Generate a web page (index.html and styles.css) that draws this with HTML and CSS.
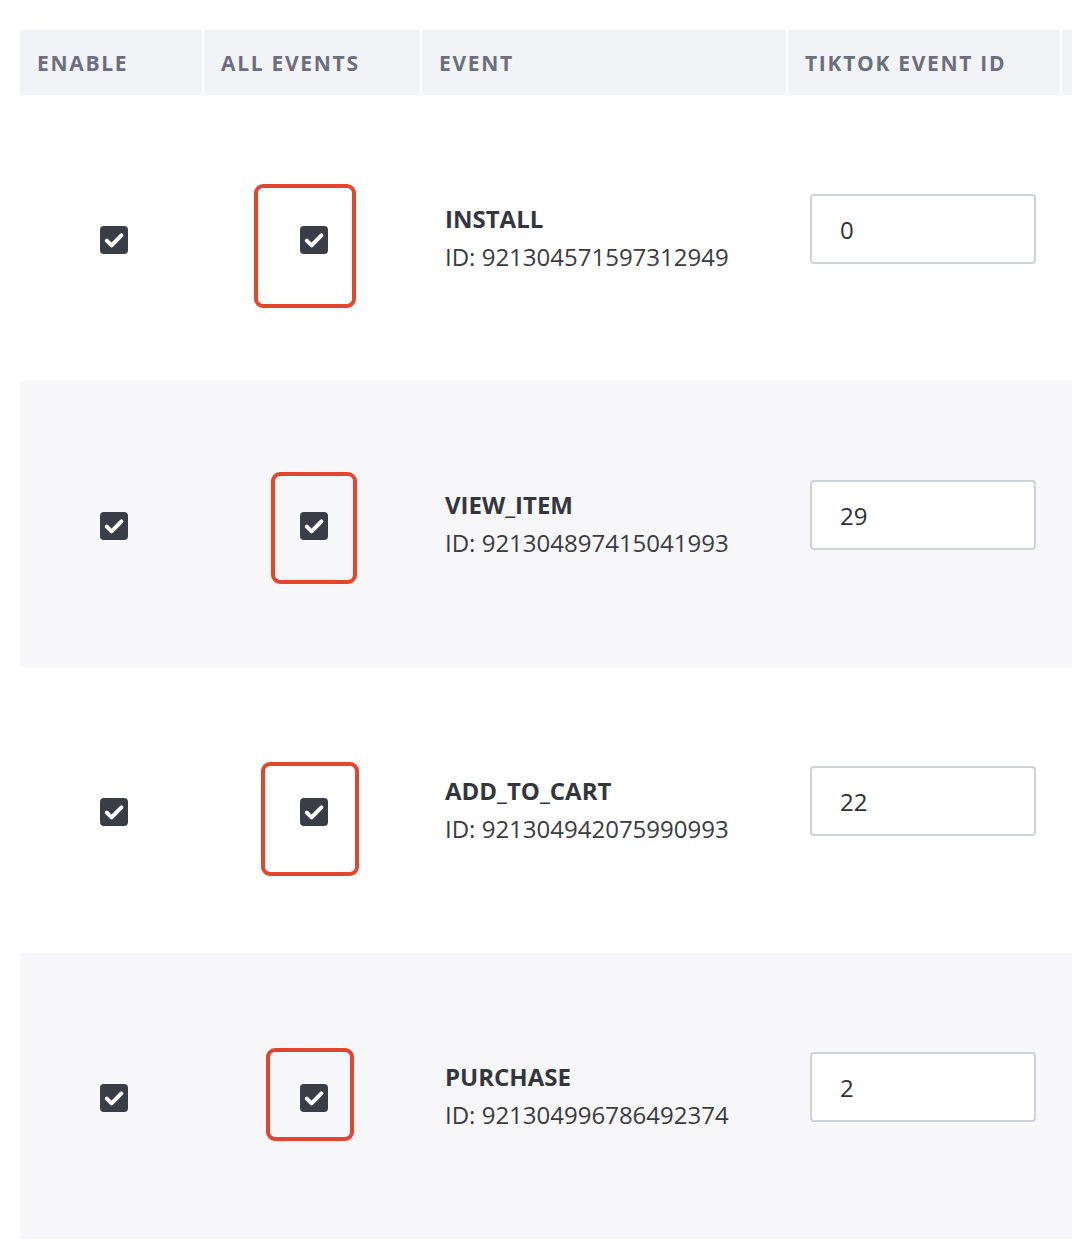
FILE: index.html
```html
<!DOCTYPE html>
<html>
<head>
<meta charset="utf-8">
<link rel="stylesheet" href="styles.css">
</head>
<body>
<div class="table">
  <div class="row head">
    <div class="th">ENABLE</div>
    <div class="th">ALL EVENTS</div>
    <div class="th">EVENT</div>
    <div class="th">TIKTOK EVENT ID</div>
    <div class="th"></div>
  </div>

  <div class="row body">
    <div class="td center"><span class="cb"><svg viewBox="0 0 28 28" width="28" height="28"><rect width="28" height="28" rx="4" fill="#3a3c46"/><path d="M6.8 14.6 L11.6 19.4 L21.4 9.4" fill="none" stroke="#fff" stroke-width="4" stroke-linecap="round" stroke-linejoin="round"/></svg></span></div>
    <div class="td center all"><span class="cb"><svg viewBox="0 0 28 28" width="28" height="28"><rect width="28" height="28" rx="4" fill="#3a3c46"/><path d="M6.8 14.6 L11.6 19.4 L21.4 9.4" fill="none" stroke="#fff" stroke-width="4" stroke-linecap="round" stroke-linejoin="round"/></svg></span><span class="mark m1"></span></div>
    <div class="td event"><div class="name">INSTALL</div><div class="id">ID: 921304571597312949</div></div>
    <div class="td field"><div class="input">0</div></div>
    <div class="td"></div>
  </div>

  <div class="row body alt">
    <div class="td center"><span class="cb"><svg viewBox="0 0 28 28" width="28" height="28"><rect width="28" height="28" rx="4" fill="#3a3c46"/><path d="M6.8 14.6 L11.6 19.4 L21.4 9.4" fill="none" stroke="#fff" stroke-width="4" stroke-linecap="round" stroke-linejoin="round"/></svg></span></div>
    <div class="td center all"><span class="cb"><svg viewBox="0 0 28 28" width="28" height="28"><rect width="28" height="28" rx="4" fill="#3a3c46"/><path d="M6.8 14.6 L11.6 19.4 L21.4 9.4" fill="none" stroke="#fff" stroke-width="4" stroke-linecap="round" stroke-linejoin="round"/></svg></span><span class="mark m2"></span></div>
    <div class="td event"><div class="name">VIEW_ITEM</div><div class="id">ID: 921304897415041993</div></div>
    <div class="td field"><div class="input">29</div></div>
    <div class="td"></div>
  </div>

  <div class="row body">
    <div class="td center"><span class="cb"><svg viewBox="0 0 28 28" width="28" height="28"><rect width="28" height="28" rx="4" fill="#3a3c46"/><path d="M6.8 14.6 L11.6 19.4 L21.4 9.4" fill="none" stroke="#fff" stroke-width="4" stroke-linecap="round" stroke-linejoin="round"/></svg></span></div>
    <div class="td center all"><span class="cb"><svg viewBox="0 0 28 28" width="28" height="28"><rect width="28" height="28" rx="4" fill="#3a3c46"/><path d="M6.8 14.6 L11.6 19.4 L21.4 9.4" fill="none" stroke="#fff" stroke-width="4" stroke-linecap="round" stroke-linejoin="round"/></svg></span><span class="mark m3"></span></div>
    <div class="td event"><div class="name">ADD_TO_CART</div><div class="id">ID: 921304942075990993</div></div>
    <div class="td field"><div class="input">22</div></div>
    <div class="td"></div>
  </div>

  <div class="row body alt">
    <div class="td center"><span class="cb"><svg viewBox="0 0 28 28" width="28" height="28"><rect width="28" height="28" rx="4" fill="#3a3c46"/><path d="M6.8 14.6 L11.6 19.4 L21.4 9.4" fill="none" stroke="#fff" stroke-width="4" stroke-linecap="round" stroke-linejoin="round"/></svg></span></div>
    <div class="td center all"><span class="cb"><svg viewBox="0 0 28 28" width="28" height="28"><rect width="28" height="28" rx="4" fill="#3a3c46"/><path d="M6.8 14.6 L11.6 19.4 L21.4 9.4" fill="none" stroke="#fff" stroke-width="4" stroke-linecap="round" stroke-linejoin="round"/></svg></span><span class="mark m4"></span></div>
    <div class="td event"><div class="name">PURCHASE</div><div class="id">ID: 921304996786492374</div></div>
    <div class="td field"><div class="input">2</div></div>
    <div class="td"></div>
  </div>
</div>
</body>
</html>
```
FILE: styles.css
```css
html, body {
  margin: 0;
  padding: 0;
  background: #ffffff;
  overflow: hidden;
  font-family: "Open Sans", "Noto Sans", sans-serif;
}

.table {
  margin: 30px 0 0 20px;
  width: 1052px;
  overflow: hidden;
}

.row {
  display: grid;
  grid-template-columns: 182px 216px 364px 272px 10px;
  column-gap: 2px;
}

.head .th {
  background: #f2f3f7;
  height: 65px;
  display: flex;
  align-items: center;
  padding-left: 17px;
  font-size: 21px;
  font-weight: 700;
  letter-spacing: 1.7px;
  color: #6b6e7d;
}

.body {
  height: 286px;
  background: #ffffff;
}

.body.alt {
  background: #f7f7f9;
}

.td {
  display: flex;
  align-items: center;
  position: relative;
}

.td.center {
  justify-content: center;
}

.td.center:first-child {
  padding-left: 6px;
}

.td.all {
  padding-left: 4px;
}

.cb {
  width: 28px;
  height: 28px;
  display: block;
  margin-top: 4px;
}

.cb svg {
  display: block;
}

.event {
  flex-direction: column;
  align-items: flex-start;
  justify-content: center;
  padding-left: 23px;
}

.name {
  font-size: 24px;
  font-weight: 700;
  color: #34363e;
  line-height: 38px;
}

.id {
  font-size: 24px;
  color: #3a3b40;
  line-height: 38px;
}

.field {
  padding-left: 22px;
}

.input {
  width: 226px;
  height: 70px;
  box-sizing: border-box;
  border: 2px solid #cfd2d9;
  border-radius: 4px;
  background: #ffffff;
  margin-bottom: 18px;
  padding-left: 28px;
  display: flex;
  align-items: center;
  font-size: 24px;
  color: #2f3036;
}

.mark {
  position: absolute;
  border: 4px solid #e2462d;
  border-radius: 9px;
  box-sizing: border-box;
}

.m1 { left: 50px; top: 89px; width: 102px; height: 124px; }
.m2 { left: 67px; top: 91px; width: 86px; height: 112px; }
.m3 { left: 57px; top: 95px; width: 98px; height: 114px; }
.m4 { left: 62px; top: 95px; width: 88px; height: 93px; }
```
